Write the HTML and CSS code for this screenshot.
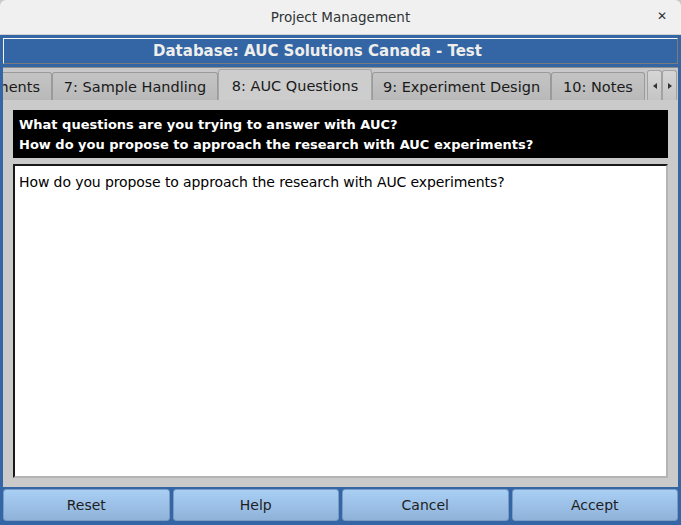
FILE: index.html
```html
<!DOCTYPE html>
<html>
<head>
<meta charset="utf-8">
<link rel="stylesheet" href="styles.css">
</head>
<body>
<div class="titlebar">
  <span class="title">Project Management</span>
  <span class="close">&#x2715;</span>
</div>
<div class="window">
  <div class="dbbar">Database: AUC Solutions Canada - Test</div>
  <div class="tabwidget">
    <div class="tabbar">
      <div class="tab first"><span class="clip">ments</span></div>
      <div class="tab">7: Sample Handling</div>
      <div class="tab active">8: AUC Questions</div>
      <div class="tab">9: Experiment Design</div>
      <div class="tab">10: Notes</div>
      <div class="scroller">
        <div class="sbtn"><span class="tri left"></span></div>
        <div class="sbtn"><span class="tri right"></span></div>
      </div>
    </div>
    <div class="pane">
      <div class="label">What questions are you trying to answer with AUC?<br>How do you propose to approach the research with AUC experiments?</div>
      <div class="editor">How do you propose to approach the research with AUC experiments?</div>
    </div>
  </div>
  <div class="buttons">
    <div class="btn">Reset</div>
    <div class="btn">Help</div>
    <div class="btn">Cancel</div>
    <div class="btn">Accept</div>
  </div>
</div>
<div class="bottomstrip"></div>
</body>
</html>
```
FILE: styles.css
```css
html, body {
  margin: 0;
  padding: 0;
  width: 681px;
  height: 525px;
  overflow: hidden;
  background: #c8c8c8;
  font-family: "DejaVu Sans", sans-serif;
}
.titlebar {
  height: 34px;
  background: #f0f0f0;
  border-bottom: 1px solid #d2d2d2;
  display: flex;
  align-items: center;
  justify-content: center;
  position: relative;
  border-radius: 6px 6px 0 0;
}
.title {
  font-size: 13.5px;
  color: #2e3436;
}
.close {
  position: absolute;
  right: 14px;
  top: 9px;
  font-size: 12px;
  font-weight: bold;
  color: #2e3436;
}
.window {
  background: #3465a4;
  padding: 3px 3px 0 3px;
  height: 487px;
  display: flex;
  flex-direction: column;
}
.dbbar {
  height: 24px;
  border-top: 1px solid #f4f4f4;
  border-left: 1px solid #f4f4f4;
  border-bottom: 1px solid #7a7a7a;
  border-right: 1px solid #7a7a7a;
  color: #eeeeec;
  font-size: 15px;
  font-weight: bold;
  display: flex;
  align-items: center;
  justify-content: center;
  padding-right: 46px;
}
.tabwidget {
  margin-top: 3px;
  background: #c9c9c9;
  border-top: 1px solid #8c8c8c;
  height: 419px;
  display: flex;
  flex-direction: column;
}
.tabbar {
  height: 32px;
  display: flex;
  align-items: flex-end;
  position: relative;
  overflow: hidden;
}
.tab {
  height: 28px;
  box-sizing: border-box;
  background: linear-gradient(#c4c4c4, #b9b9b9);
  border: 1px solid #9a9a9a;
  border-bottom: none;
  border-radius: 3px 3px 0 0;
  font-size: 14.5px;
  color: #1a1a1a;
  display: flex;
  align-items: center;
  justify-content: center;
  padding: 1px 0 0 0;
  white-space: nowrap;
}
.tab.first {
  width: 52px;
  margin-left: -3px;
  justify-content: flex-end;
  padding-right: 11px;
  border-left: none;
  overflow: hidden;
}
.clip {
  display: block;
  flex: none;
}
.tab.active {
  height: 31px;
  background: #cdcdcd;
  border-color: #a6a6a6;
  width: 154px;
  padding: 1px 0 0 0;
}
.tab:nth-child(2) { width: 166px; }
.tab:nth-child(4) { width: 179px; }
.tab:nth-child(5) { width: 94px; }
.scroller {
  display: flex;
  margin-left: 2px;
  height: 30px;
}
.sbtn {
  width: 15px;
  box-sizing: border-box;
  background: linear-gradient(#d6d6d6, #c4c4c4);
  border: 1px solid #a2a2a2;
  border-bottom: none;
  border-radius: 3px 3px 0 0;
  display: flex;
  align-items: center;
  justify-content: center;
}
.tri {
  width: 0;
  height: 0;
  border-top: 3px solid transparent;
  border-bottom: 3px solid transparent;
}
.tri.left { border-right: 4px solid #333; }
.tri.right { border-left: 4px solid #333; }
.pane {
  flex: 1;
  background: #cacaca;
  padding: 10px 10px 9px 10px;
  display: flex;
  flex-direction: column;
  gap: 6px;
}
.label {
  background: #000000;
  color: #ffffff;
  font-size: 13px;
  font-weight: bold;
  line-height: 20px;
  padding: 5px 6px 3px 6px;
  height: 40px;
}
.editor {
  flex: 1;
  background: #ffffff;
  border-top: 2px solid #1a1a1a;
  border-left: 2px solid #1a1a1a;
  border-right: 2px solid #b4b4b4;
  border-bottom: 2px solid #b4b4b4;
  font-size: 14px;
  letter-spacing: -0.1px;
  color: #000;
  padding: 8px 4px;
}
.buttons {
  display: flex;
  gap: 3px;
  margin-top: 2px;
  height: 32px;
}
.btn {
  flex: 1;
  box-sizing: border-box;
  background: linear-gradient(#a9cff5, #8fb2d9);
  border: 1px solid #7a9cc4;
  border-radius: 3px;
  font-size: 14px;
  color: #1e1e1e;
  display: flex;
  align-items: center;
  justify-content: center;
}
.bottomstrip {
  height: 4px;
  background: #c8c8c8;
}
```
